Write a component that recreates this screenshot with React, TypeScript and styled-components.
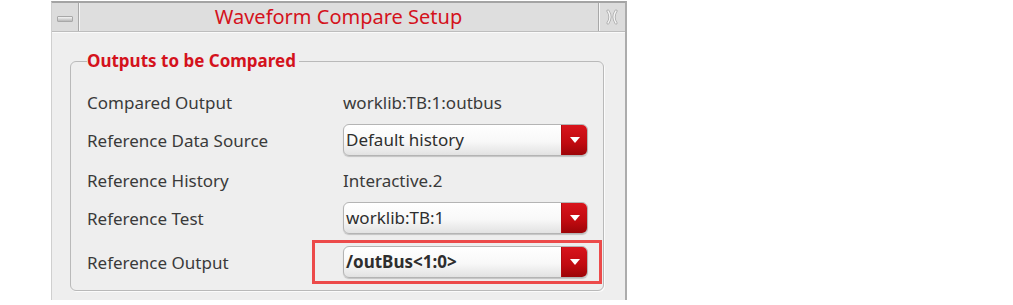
import styled, { createGlobalStyle } from "styled-components";

const GlobalStyle = createGlobalStyle`
  html, body {
    margin: 0;
    padding: 0;
    background: #ffffff;
  }
  body {
    font-family: "Noto Sans", "Open Sans", sans-serif;
  }
`;

const Page = styled.div`
  width: 1013px;
  height: 305px;
  padding: 1px 0 0 51px;
  box-sizing: border-box;
  overflow: hidden;
`;

const Window = styled.div`
  width: 576px;
  height: 299px;
  box-sizing: border-box;
  background: #eeeeee;
  border-top: 2px solid #a4a4a4;
  border-right: 2px solid #acacac;
  border-left: 1px solid #cfcfcf;
  display: flex;
  flex-direction: column;
`;

const TitleBar = styled.div`
  height: 28px;
  display: flex;
  background: #dedede;
  border-bottom: 1px solid #bdbdbd;
  box-shadow: 0 1px 0 #fafafa;
`;

type Side = { side: "left" | "right" };

const FrameButton = styled.div<Side>`
  width: 27px;
  height: 28px;
  box-sizing: border-box;
  display: flex;
  align-items: center;
  justify-content: center;
  background: #dcdcdc;
  border-left: ${(p) => (p.side === "right" ? "1px solid #a8a8a8" : "none")};
  border-right: ${(p) => (p.side === "left" ? "1px solid #a8a8a8" : "none")};
  box-shadow: ${(p) =>
    p.side === "left" ? "1px 0 0 #f6f6f6" : "inset 1px 0 0 #f6f6f6"};
`;

const MinBar = styled.div`
  width: 14px;
  height: 4px;
  margin-top: 4px;
  background: linear-gradient(#f4f4f4, #b8b8b8);
  border: 1px solid #a8a8a8;
  border-radius: 1px;
`;

const Title = styled.div`
  flex: 1;
  text-align: center;
  font-size: 20px;
  line-height: 28px;
  color: #d4121c;
`;

const Body = styled.div`
  padding: 20px 21px 0 18px;
`;

const Group = styled.fieldset`
  margin: 0;
  padding: 16px 14px 12px 16px;
  border: 1px solid #b9b9b9;
  border-radius: 6px;
  box-shadow: 1px 1px 0 #fbfbfb;
`;

const Legend = styled.legend`
  padding: 0 3px 0 0;
  margin-left: 0;
  font-size: 17px;
  font-weight: 700;
  color: #d4121c;
  line-height: 18px;
`;

const Row = styled.div<{ $gap: number }>`
  display: flex;
  align-items: center;
  height: 32px;
  margin-top: ${(p) => p.$gap}px;
`;

const Label = styled.div`
  width: 256px;
  font-size: 17px;
  color: #3a3a3a;
`;

const Value = styled.div`
  font-size: 17px;
  color: #3a3a3a;
`;

const Highlight = styled.div`
  position: relative;
  &::after {
    content: "";
    position: absolute;
    top: -6px;
    bottom: -6px;
    left: -31px;
    right: -14px;
    border: 3px solid #ec4a4a;
    pointer-events: none;
  }
`;

const Select = styled.div`
  width: 245px;
  height: 32px;
  box-sizing: border-box;
  display: flex;
  border-radius: 6px;
  border: 1px solid #b4b4b4;
  background: linear-gradient(#ffffff 0%, #f8f8f8 55%, #e2e2e2 100%);
  box-shadow: 0 1px 1px rgba(0, 0, 0, 0.18);
  overflow: hidden;
`;

const SelectText = styled.div<{ $bold?: boolean }>`
  flex: 1;
  padding-left: 2px;
  font-size: 17px;
  line-height: 30px;
  color: #2e2e2e;
  font-weight: ${(p) => (p.$bold ? 700 : 400)};
`;

const Arrow = styled.div`
  width: 25px;
  display: flex;
  align-items: center;
  justify-content: center;
  background: linear-gradient(#d8141c 0%, #c00a10 60%, #9c0408 100%);
  border-left: 1px solid #b00c10;
`;

function ArrowIcon() {
  return (
    <svg width="10" height="6" viewBox="0 0 10 6">
      <polygon points="0,0 10,0 5,6" fill="#ffffff" />
    </svg>
  );
}

function CloseIcon() {
  return (
    <svg width="14" height="16" viewBox="0 0 14 16">
      <g fill="none" strokeLinecap="round">
        <path d="M3 2 Q7 8 3 14 M11 2 Q7 8 11 14" stroke="#a9a9a9" strokeWidth="3" />
        <path d="M3 2 Q7 8 3 14 M11 2 Q7 8 11 14" stroke="#f4f4f4" strokeWidth="1.4" />
      </g>
    </svg>
  );
}

function Dropdown({ text, bold }: { text: string; bold?: boolean }) {
  return (
    <Select>
      <SelectText $bold={bold}>{text}</SelectText>
      <Arrow>
        <ArrowIcon />
      </Arrow>
    </Select>
  );
}

export default function App() {
  return (
    <Page>
      <GlobalStyle />
      <Window>
        <TitleBar>
          <FrameButton side="left">
            <MinBar />
          </FrameButton>
          <Title>Waveform Compare Setup</Title>
          <FrameButton side="right">
            <CloseIcon />
          </FrameButton>
        </TitleBar>
        <Body>
          <Group>
            <Legend>Outputs to be Compared</Legend>
            <Row $gap={0}>
              <Label>Compared Output</Label>
              <Value>worklib:TB:1:outbus</Value>
            </Row>
            <Row $gap={6}>
              <Label>Reference Data Source</Label>
              <Dropdown text="Default history" />
            </Row>
            <Row $gap={8}>
              <Label>Reference History</Label>
              <Value>Interactive.2</Value>
            </Row>
            <Row $gap={6}>
              <Label>Reference Test</Label>
              <Dropdown text="worklib:TB:1" />
            </Row>
            <Row $gap={12}>
              <Label>Reference Output</Label>
              <Highlight>
                <Dropdown text="/outBus<1:0>" bold />
              </Highlight>
            </Row>
          </Group>
        </Body>
      </Window>
    </Page>
  );
}
